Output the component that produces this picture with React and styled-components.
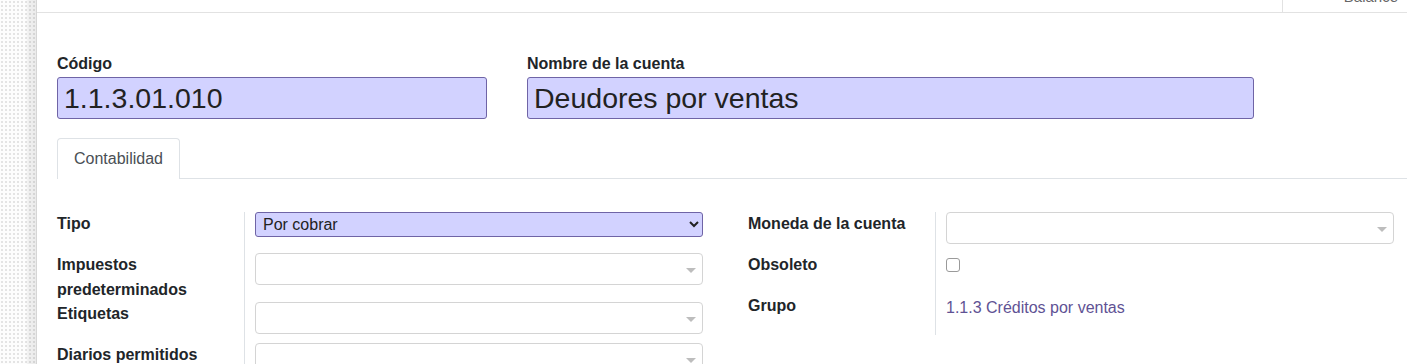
import React from "react";
import styled, { createGlobalStyle } from "styled-components";

const GlobalStyle = createGlobalStyle`
  html, body {
    margin: 0;
    padding: 0;
    background: #fff;
    overflow: hidden;
  }
  body {
    font-family: "Liberation Sans", Arial, sans-serif;
    color: #212529;
  }
`;

const Page = styled.div`
  display: flex;
  height: 364px;
  width: 1407px;
`;

const Backdrop = styled.div`
  width: 36px;
  flex-shrink: 0;
  background-color: #fdfdfd;
  background-image:
    linear-gradient(to right, rgba(0, 0, 0, 0) 26px, rgba(0, 0, 0, 0.05) 28px, rgba(0, 0, 0, 0.07) 36px),
    radial-gradient(#e4e4e4 1px, transparent 1.2px);
  background-size: 36px 100%, 4px 4px;
`;

const Sheet = styled.div`
  flex: 1;
  border-left: 1px solid #d6d6d6;
  background: #fff;
  display: flex;
  flex-direction: column;
  min-width: 0;
  overflow: hidden;
`;

const ButtonBox = styled.div`
  height: 12px;
  flex-shrink: 0;
  border-bottom: 1px solid #e2e2e2;
  display: flex;
  justify-content: flex-end;
  overflow: hidden;
`;

const StatButton = styled.div`
  width: 125px;
  border-left: 1px solid #e2e2e2;
  display: flex;
  justify-content: flex-end;
  padding-right: 9px;
  box-sizing: border-box;
`;

const StatText = styled.span`
  font-size: 15px;
  line-height: 15px;
  margin-top: -11px;
  color: #666;
`;

const Content = styled.div`
  flex-shrink: 0;
  padding: 41px 13px 0 20px;
`;

const TitleRow = styled.div`
  display: flex;
  gap: 40px;
`;

const TitleField = styled.div`
  width: ${(p) => p.$width}px;
  display: flex;
  flex-direction: column;
`;

const TitleLabel = styled.label`
  font-size: 16px;
  font-weight: 700;
  line-height: 20px;
  margin-bottom: 3px;
`;

const TitleInput = styled.div`
  height: 42px;
  box-sizing: border-box;
  background: #d2d2ff;
  border: 1px solid #6f64a6;
  border-radius: 3px;
  padding: 0 6px;
  font-size: 28.5px;
  line-height: 40px;
  color: #222;
`;

const Tabs = styled.div`
  display: flex;
  margin-top: 19px;
  border-bottom: 1px solid #dee2e6;
  margin-right: -13px;
`;

const Tab = styled.div`
  height: 41px;
  box-sizing: border-box;
  padding: 0 16px;
  border: 1px solid #dee2e6;
  border-bottom: none;
  border-radius: 4px 4px 0 0;
  margin-bottom: -1px;
  background: #fff;
  font-size: 16px;
  line-height: 40px;
  color: #4a4f55;
`;

const Groups = styled.div`
  display: flex;
  gap: 45px;
  margin-top: 33px;
`;

const Group = styled.div`
  width: 646px;
  display: grid;
  grid-template-columns: 187px 1fr;
  grid-auto-rows: minmax(41px, auto);
  align-content: start;
`;

const Label = styled.div`
  font-size: 16px;
  font-weight: 700;
  line-height: 24.5px;
  padding-right: 10px;
`;

const Cell = styled.div`
  border-left: 1px solid #dee2e6;
  padding-left: 10px;
`;

const Select = styled.select`
  width: 100%;
  height: 25px;
  box-sizing: border-box;
  background: #d2d2ff;
  border: 1px solid #6f64a6;
  border-radius: 3px;
  font-family: "Liberation Sans", Arial, sans-serif;
  font-size: 16px;
  color: #222;
  padding: 0 3px;
`;

const Many2One = styled.div`
  height: 32px;
  box-sizing: border-box;
  border: 1px solid #d4d4d4;
  border-radius: 4px;
  display: flex;
  align-items: center;
  justify-content: flex-end;
  padding-right: 6px;
`;

const Caret = styled.span`
  width: 0;
  height: 0;
  margin-top: 3px;
  border-left: 5px solid transparent;
  border-right: 5px solid transparent;
  border-top: 5px solid #bdbdbd;
`;

const Check = styled.span`
  display: block;
  width: 14px;
  height: 14px;
  box-sizing: border-box;
  margin-top: 5px;
  border: 1px solid #9a9a9a;
  border-radius: 3px;
`;

const Link = styled.a`
  display: block;
  font-size: 16px;
  line-height: 26px;
  padding-top: 1px;
  color: #5f5294;
  text-decoration: none;
`;

const EmptyField = () => (
  <Many2One>
    <Caret />
  </Many2One>
);

const App = () => (
  <>
    <GlobalStyle />
    <Page>
      <Backdrop />
      <Sheet>
        <ButtonBox>
          <StatButton>
            <StatText>Balance</StatText>
          </StatButton>
        </ButtonBox>
        <Content>
          <TitleRow>
            <TitleField $width={430}>
              <TitleLabel>Código</TitleLabel>
              <TitleInput>1.1.3.01.010</TitleInput>
            </TitleField>
            <TitleField $width={727}>
              <TitleLabel>Nombre de la cuenta</TitleLabel>
              <TitleInput>Deudores por ventas</TitleInput>
            </TitleField>
          </TitleRow>
          <Tabs>
            <Tab>Contabilidad</Tab>
          </Tabs>
          <Groups>
            <Group>
              <Label>Tipo</Label>
              <Cell>
                <Select defaultValue="receivable">
                  <option value="receivable">Por cobrar</option>
                </Select>
              </Cell>
              <Label>Impuestos predeterminados</Label>
              <Cell>
                <EmptyField />
              </Cell>
              <Label>Etiquetas</Label>
              <Cell>
                <EmptyField />
              </Cell>
              <Label>Diarios permitidos</Label>
              <Cell>
                <EmptyField />
              </Cell>
            </Group>
            <Group>
              <Label>Moneda de la cuenta</Label>
              <Cell>
                <EmptyField />
              </Cell>
              <Label>Obsoleto</Label>
              <Cell>
                <Check />
              </Cell>
              <Label>Grupo</Label>
              <Cell>
                <Link href="#">1.1.3 Créditos por ventas</Link>
              </Cell>
            </Group>
          </Groups>
        </Content>
      </Sheet>
    </Page>
  </>
);

export default App;
